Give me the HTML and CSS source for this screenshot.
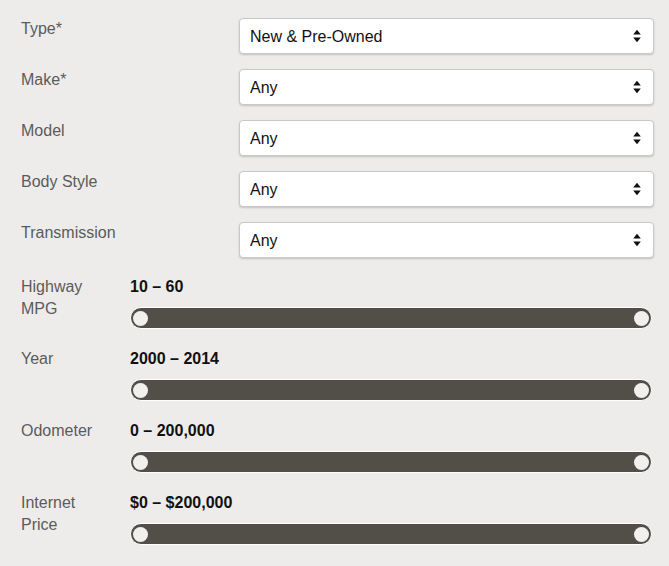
FILE: index.html
```
<!DOCTYPE html>
<html lang="en">
<head>
    <meta charset="UTF-8">
    <meta name="viewport" content="width=device-width, initial-scale=1.0">
    <title>Search Filters</title>
    <link rel="stylesheet" href="styles.css">
</head>
<body>
    <form class="filters">
        <div class="selects">
            <div class="field">
                <label class="field-label" for="type">Type*</label>
                <div class="select-wrap">
                    <select id="type"><option>New &amp; Pre-Owned</option></select>
                    <svg class="select-arrow" viewBox="0 0 8 14"><path d="M4 0.8 L7.8 5.6 H0.2 Z M4 13.2 L7.8 8.4 H0.2 Z"/></svg>
                </div>
            </div>
            <div class="field">
                <label class="field-label" for="make">Make*</label>
                <div class="select-wrap">
                    <select id="make"><option>Any</option></select>
                    <svg class="select-arrow" viewBox="0 0 8 14"><path d="M4 0.8 L7.8 5.6 H0.2 Z M4 13.2 L7.8 8.4 H0.2 Z"/></svg>
                </div>
            </div>
            <div class="field">
                <label class="field-label" for="model">Model</label>
                <div class="select-wrap">
                    <select id="model"><option>Any</option></select>
                    <svg class="select-arrow" viewBox="0 0 8 14"><path d="M4 0.8 L7.8 5.6 H0.2 Z M4 13.2 L7.8 8.4 H0.2 Z"/></svg>
                </div>
            </div>
            <div class="field">
                <label class="field-label" for="body">Body Style</label>
                <div class="select-wrap">
                    <select id="body"><option>Any</option></select>
                    <svg class="select-arrow" viewBox="0 0 8 14"><path d="M4 0.8 L7.8 5.6 H0.2 Z M4 13.2 L7.8 8.4 H0.2 Z"/></svg>
                </div>
            </div>
            <div class="field">
                <label class="field-label" for="trans">Transmission</label>
                <div class="select-wrap">
                    <select id="trans"><option>Any</option></select>
                    <svg class="select-arrow" viewBox="0 0 8 14"><path d="M4 0.8 L7.8 5.6 H0.2 Z M4 13.2 L7.8 8.4 H0.2 Z"/></svg>
                </div>
            </div>
        </div>

        <div class="ranges">
            <div class="range">
                <div class="range-label">Highway<br>MPG</div>
                <div class="range-body">
                    <div class="range-value">10 – 60</div>
                    <div class="range-track"><span class="knob"></span><span class="knob"></span></div>
                </div>
            </div>
            <div class="range">
                <div class="range-label">Year</div>
                <div class="range-body">
                    <div class="range-value">2000 – 2014</div>
                    <div class="range-track"><span class="knob"></span><span class="knob"></span></div>
                </div>
            </div>
            <div class="range">
                <div class="range-label">Odometer</div>
                <div class="range-body">
                    <div class="range-value">0 – 200,000</div>
                    <div class="range-track"><span class="knob"></span><span class="knob"></span></div>
                </div>
            </div>
            <div class="range">
                <div class="range-label">Internet<br>Price</div>
                <div class="range-body">
                    <div class="range-value">$0 – $200,000</div>
                    <div class="range-track"><span class="knob"></span><span class="knob"></span></div>
                </div>
            </div>
        </div>
    </form>
</body>
</html>
```

FILE: styles.css
```
body {
    margin: 0;
    background-color: #eeeceb;
    font-family: "Liberation Sans", Arial, sans-serif;
    font-size: 16px;
}
.filters {
    padding: 18px 15px 0 21px;
}
.selects {
    display: flex;
    flex-direction: column;
    gap: 15px;
    margin-bottom: 18px;
}
.field {
    display: flex;
}
.field-label {
    width: 218px;
    flex-shrink: 0;
    line-height: 22px;
    color: #5b5b5b;
}
.select-wrap {
    position: relative;
    flex: 1;
}
select {
    -webkit-appearance: none;
    appearance: none;
    display: block;
    width: 100%;
    height: 36px;
    padding: 0 30px 0 10px;
    border: 1px solid #c9c9c9;
    border-radius: 4px;
    background: #fff;
    box-shadow: 0 1px 2px rgba(0,0,0,0.18);
    font-family: inherit;
    font-size: 16px;
    color: #111;
}
.select-arrow {
    position: absolute;
    right: 13px;
    top: 11px;
    width: 8px;
    height: 14px;
    fill: #111;
    pointer-events: none;
}
.ranges {
    display: flex;
    flex-direction: column;
    gap: 19px;
}
.range {
    display: flex;
}
.range-label {
    width: 109px;
    flex-shrink: 0;
    line-height: 22px;
    color: #5b5b5b;
}
.range-body {
    flex: 1;
    padding-right: 2px;
}
.range-value {
    line-height: 22px;
    font-weight: bold;
    color: #111;
    margin-bottom: 9px;
}
.range-track {
    display: flex;
    justify-content: space-between;
    align-items: center;
    height: 20px;
    padding: 0 2px;
    border: 1px solid #fff;
    border-radius: 12px;
    background-color: #524e48;
}
.knob {
    width: 15px;
    height: 15px;
    border-radius: 50%;
    background-color: #f2f0ef;
}
```
